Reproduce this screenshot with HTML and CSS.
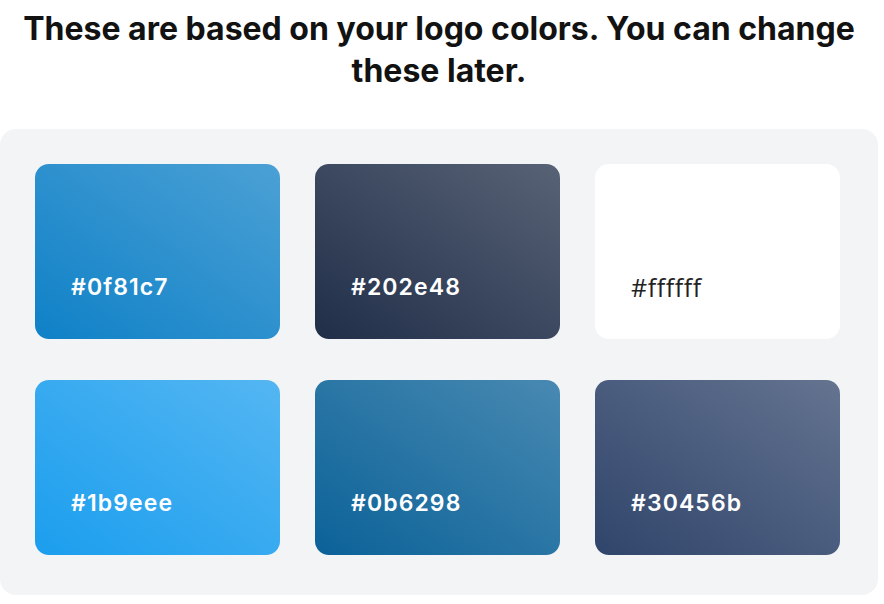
FILE: index.html
```html
<!DOCTYPE html>
<html lang="en">
<head>
<meta charset="utf-8">
<title>Logo colors</title>
<link rel="stylesheet" href="styles.css">
</head>
<body>
<div class="wrap">
  <h1 class="title">These are based on your logo colors. You can change these later.</h1>
  <div class="panel">
    <div class="swatch c1"><span class="hex">#0f81c7</span></div>
    <div class="swatch c2"><span class="hex">#202e48</span></div>
    <div class="swatch c3"><span class="hex light">#ffffff</span></div>
    <div class="swatch c4"><span class="hex">#1b9eee</span></div>
    <div class="swatch c5"><span class="hex">#0b6298</span></div>
    <div class="swatch c6"><span class="hex">#30456b</span></div>
  </div>
</div>
</body>
</html>
```
FILE: styles.css
```css
html, body {
  margin: 0;
  padding: 0;
  background: #ffffff;
}
.wrap {
  width: 878px;
  font-family: "Inter", "Noto Sans", sans-serif;
}
.title {
  margin: 0;
  padding: 8px 0 0;
  font-size: 32px;
  line-height: 42px;
  font-weight: 700;
  color: #121212;
  text-align: center;
}
.panel {
  margin-top: 37px;
  background: #f3f4f6;
  border-radius: 16px;
  padding: 35px 38px 40px 35px;
  display: grid;
  grid-template-columns: repeat(3, 245px);
  grid-auto-rows: 175px;
  column-gap: 35px;
  row-gap: 41px;
}
.swatch {
  border-radius: 14px;
  display: flex;
  align-items: flex-end;
  padding: 0 0 38px 36px;
  box-sizing: border-box;
}
.hex {
  font-size: 23px;
  font-weight: 600;
  color: #ffffff;
  line-height: 28px;
  letter-spacing: 1.1px;
}
.hex.light {
  font-family: "Open Sans", "DejaVu Sans", sans-serif;
  font-weight: 400;
  font-size: 25px;
  letter-spacing: 0.6px;
  color: #222222;
}
.c1 { background: linear-gradient(to top right, rgba(255,255,255,0) 0%, rgba(255,255,255,0.25) 100%), #0f81c7; }
.c2 { background: linear-gradient(to top right, rgba(255,255,255,0) 0%, rgba(255,255,255,0.25) 100%), #202e48; }
.c3 { background: #ffffff; }
.c4 { background: linear-gradient(to top right, rgba(255,255,255,0) 0%, rgba(255,255,255,0.25) 100%), #1b9eee; }
.c5 { background: linear-gradient(to top right, rgba(255,255,255,0) 0%, rgba(255,255,255,0.25) 100%), #0b6298; }
.c6 { background: linear-gradient(to top right, rgba(255,255,255,0) 0%, rgba(255,255,255,0.25) 100%), #30456b; }
```
